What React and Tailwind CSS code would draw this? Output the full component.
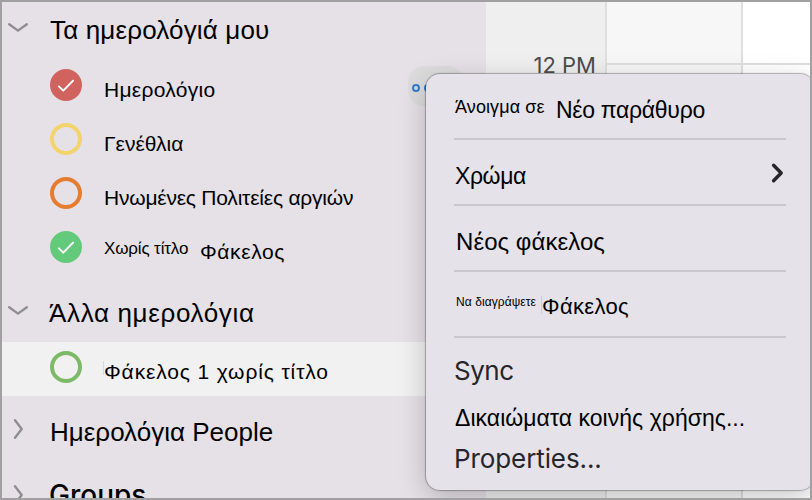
import React from "react";
import clsx from "clsx";

const myCalendars = [
	{ name: 'Ημερολόγιο', ring: 'border-[#d1635f]', fill: 'bg-[#d1635f]', checked: true, label: 'tracking-[0.3px]' },
	{ name: 'Γενέθλια', ring: 'border-[#f4d26c]', label: 'tracking-[0px]' },
	{ name: 'Ηνωμένες Πολιτείες αργιών', ring: 'border-[#e67c30]', label: 'tracking-[-0.22px]' },
	{ prefix: 'Χωρίς τίτλο', name: 'Φάκελος', ring: 'border-[#64ca7b]', fill: 'bg-[#64ca7b]', checked: true, label: 'tracking-[0.6px]' },
];

const Chevron = ({ open }) => (
	<svg width="22" height="22" viewBox="0 0 22 22" fill="none" stroke="#8f8d94" strokeWidth="2.4" strokeLinecap="round" strokeLinejoin="round">
		<path d={open ? "M2.2 8.2 11 14.6 19.8 8.2" : "M8 2.2 14.7 11 8 19.8"} />
	</svg>
);

const SectionHeader = ({ open, className, chevronClass, children }) => (
	<div className={clsx("flex shrink-0 items-start pl-[5px]", className)}>
		<div className={chevronClass}><Chevron open={open} /></div>
		{children}
	</div>
);

const CalendarRow = ({ item, selected }) => (
	<div className={clsx("flex h-[54px] shrink-0 items-start pl-12", selected && "bg-[#f1f1f1]")}>
		<div className={clsx(
			"flex size-8 shrink-0 items-center justify-center rounded-full border-4",
			selected ? "mt-[9px]" : "mt-[11px]",
			item.ring,
			item.fill
		)}>
			{item.checked && (
				<svg className="size-5 shrink-0" viewBox="0 0 20 20" fill="none" stroke="#fff" strokeWidth="2" strokeLinecap="round" strokeLinejoin="round">
					<path d="M2.9 11.4 7.3 15.6 17.1 5.6" />
				</svg>
			)}
		</div>
		{item.prefix && (
			<span className="mr-[11px] ml-[22px] mt-[17px] w-[85px] whitespace-nowrap text-[17px] leading-[24px] tracking-[-0.15px]">{item.prefix}</span>
		)}
		{selected && <span className="ml-[21px] mt-[19px] -mr-[22px] h-[14px] w-px bg-[#d8d8d8]" />}
		<span className={clsx("text-[21px] leading-7", selected ? "mt-4" : "mt-[18px]", !item.prefix && "ml-[22px]", item.label)}>
			{item.name}
		</span>
	</div>
);

const Sidebar = () => (
	<div className="flex w-[484px] shrink-0 flex-col overflow-hidden bg-[#e5e1e7]">
		<SectionHeader open className="h-14" chevronClass="mt-[14px]">
			<h2 className="ml-[21px] mt-3 text-[26px] leading-8 tracking-[0.15px]">Τα ημερολόγιά μου</h2>
		</SectionHeader>
		<div className="relative">
			{myCalendars.map((item) => <CalendarRow key={item.name} item={item} />)}
			<div className="absolute left-[406px] top-[8px] flex h-10 w-14 items-center gap-1 rounded-[16px] bg-[#dddcdc] pl-1 pt-1">
				<span className="size-2 rounded-full border-2 border-[#347bd3]" />
				<span className="size-2 rounded-full border-2 border-[#347bd3]" />
				<span className="size-2 rounded-full border-2 border-[#347bd3]" />
			</div>
		</div>
		<SectionHeader open className="h-[68px]" chevronClass="mt-[25px]">
			<h2 className="ml-5 mt-[23px] text-[26px] leading-8 tracking-[0.65px]">Άλλα ημερολόγια</h2>
		</SectionHeader>
		<CalendarRow selected item={{ name: 'Φάκελος 1 χωρίς τίτλο', ring: 'border-[#7dba68]', label: 'tracking-[0.87px]' }} />
		<SectionHeader className="h-[66px]" chevronClass="mt-[22px]">
			<h2 className="ml-[21px] mt-5 text-[26px] leading-8 tracking-[0px]">Ημερολόγια People</h2>
		</SectionHeader>
		<SectionHeader className="h-[66px]" chevronClass="mt-[22px]">
			<h2 className="ml-5 mt-[17px] font-['Inter'] text-[28px] font-medium leading-8">Groups</h2>
		</SectionHeader>
	</div>
);

const DayGrid = () => (
	<div className="flex min-w-0 flex-1">
		<div className="w-[119px] shrink-0 bg-[#efefef] pt-[49px] pr-[9px] text-right font-['Inter'] text-[22px] leading-7 tracking-[0px] text-[#4c4c4c]">12 PM</div>
		<div className="w-[138px] shrink-0 border-x-2 border-[#dfdfdf] bg-[#f7f7f7] pt-[61px]">
			<div className="h-[2px] bg-[#dfdfdf]" />
		</div>
		<div className="flex-1 bg-white pt-[61px]">
			<div className="h-[2px] bg-[#dfdfdf]" />
		</div>
	</div>
);

const Divider = () => <div className="h-[2px] w-[332px] shrink-0 bg-[#cac7ce]" />;

const ContextMenu = () => (
	<div className="absolute left-[424px] top-[72px] flex h-[416px] w-[388px] flex-col rounded-[14px] bg-[#e5e2e9] pl-7 shadow-[0_0_1px_1px_rgba(0,0,0,0.28),0_8px_28px_rgba(0,0,0,0.22)]">
		<div className="flex h-16 items-start">
			<span className="mt-[20px] w-[102px] whitespace-nowrap pl-px text-[18px] leading-[26px] tracking-[0.1px]">Άνοιγμα σε</span>
			<span className="mt-[21px] text-[23px] leading-[30px] tracking-[-0.3px]">Νέο παράθυρο</span>
		</div>
		<Divider />
		<div className="flex h-16 items-start">
			<span className="mt-[21px] w-[315px] pl-px text-[23px] leading-[30px] tracking-[-0.4px]">Χρώμα</span>
			<svg className="mt-[22px]" width="16" height="22" viewBox="0 0 16 22" fill="none" stroke="#262529" strokeWidth="3.4" strokeLinecap="round" strokeLinejoin="round">
				<path d="M4.6 3.2 12.2 11 4.6 18.8" />
			</svg>
		</div>
		<Divider />
		<div className="flex h-16 items-start">
			<span className="mt-[21px] pl-[2px] text-[24px] leading-[30px] tracking-[0.05px]">Νέος φάκελος</span>
		</div>
		<Divider />
		<div className="flex h-16 items-start">
			<span className="mt-[20px] w-[87px] whitespace-nowrap pl-[2px] text-[12px] leading-[20px] tracking-[0.08px]">Να διαγράψετε</span>
			<span className="mt-6 h-[18px] w-px bg-[#cecbd2]" />
			<span className="mt-[20px] text-[22px] leading-[30px] tracking-[0.35px]">Φάκελος</span>
		</div>
		<Divider />
		<span className="mt-[17px] font-['Inter'] text-[26px] leading-[32px] tracking-[-0.5px] text-[#262529]">Sync</span>
		<span className="mt-[16px] pl-px text-[23px] leading-[30px] tracking-[0.04px]">Δικαιώματα κοινής χρήσης...</span>
		<span className="mt-[10px] font-['Inter'] text-[26px] leading-[32px] tracking-[-0.1px] text-[#262529]">Properties...</span>
	</div>
);

const App = () => (
	<main className="relative flex h-[500px] w-[812px] overflow-hidden border-2 border-[#a0a0a0] font-['Liberation_Sans',sans-serif] text-black">
		<Sidebar />
		<DayGrid />
		<ContextMenu />
	</main>
);

export default App;
